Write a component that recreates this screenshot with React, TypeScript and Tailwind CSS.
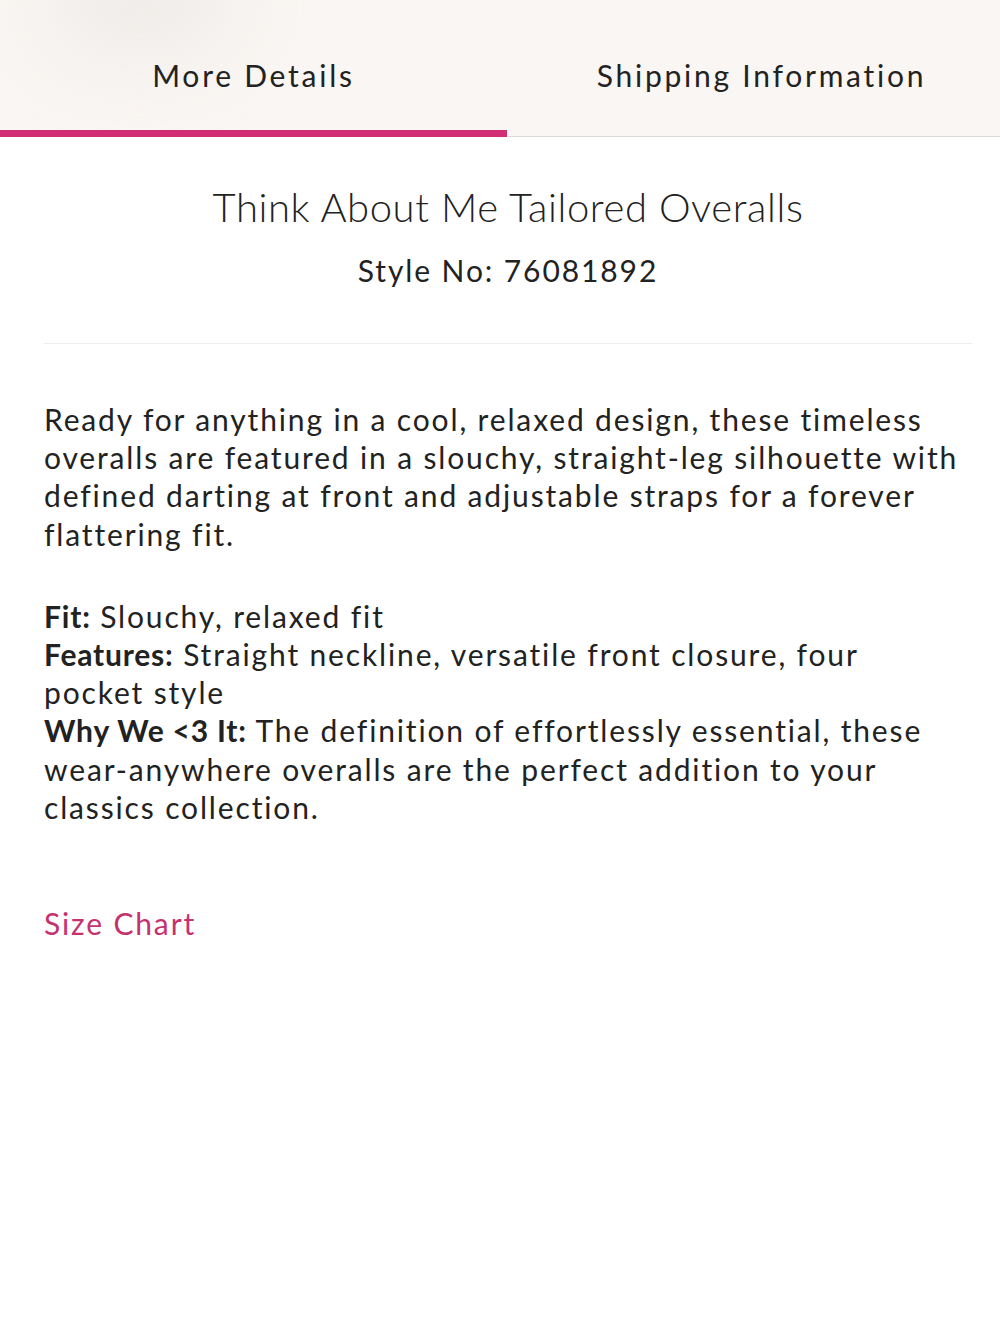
export default function App() {
  return (
    <div className="min-h-[1333px] w-[1000px] bg-white text-[#222] font-['Lato',sans-serif]">
      {/* tabs */}
      <div className="relative flex h-[137px] bg-[#faf6f3]">
        <div className="pointer-events-none absolute left-[40px] top-[-60px] h-[120px] w-[200px] rounded-full bg-[#e9e6e3] opacity-60 blur-2xl" />
        <button className="relative flex w-[507px] items-center justify-center border-b-[7px] border-[#d22e76] pt-[20px] text-[30px] tracking-[2.75px] text-[#222]">
          More Details
        </button>
        <button className="relative flex flex-1 items-center justify-center border-b border-[#dedad6] pt-[20px] pb-[6px] pl-[16px] text-[30px] tracking-[2.75px] text-[#222]">
          Shipping Information
        </button>
      </div>

      <div className="pl-[44px] pr-[28px]">
        <div className="border-b border-[#ececec] pb-[54px] pt-[44px] text-center">
          <h1 className="text-[40px] font-light leading-[52px] tracking-[0.6px] text-[#222]">
            Think About Me Tailored Overalls
          </h1>
          <p className="mt-[18px] text-[30px] leading-[38px] tracking-[1.9px] text-[#222]">
            Style No: 76081892
          </p>
        </div>

        <div className="max-w-[916px] pt-[56px] text-[30px] leading-[38.2px] tracking-[1.85px] text-[#222]">
          <p>
            Ready for anything in a cool, relaxed design, these timeless overalls are featured in a
            slouchy, straight-leg silhouette with defined darting at front and adjustable straps for
            a forever flattering fit.
          </p>
          <p className="mt-[44px]">
            <b className="font-bold tracking-[0.8px]">Fit:</b> Slouchy, relaxed fit
            <br />
            <b className="font-bold tracking-[0.8px]">Features:</b> Straight neckline, versatile
            front closure, four pocket style
            <br />
            <b className="font-bold tracking-[0.8px]">Why We &lt;3 It:</b> The definition of
            effortlessly essential, these wear-anywhere overalls are the perfect addition to your
            classics collection.
          </p>
          <a className="mt-[78px] block text-[#c4326f]">Size Chart</a>
        </div>
      </div>
    </div>
  );
}
